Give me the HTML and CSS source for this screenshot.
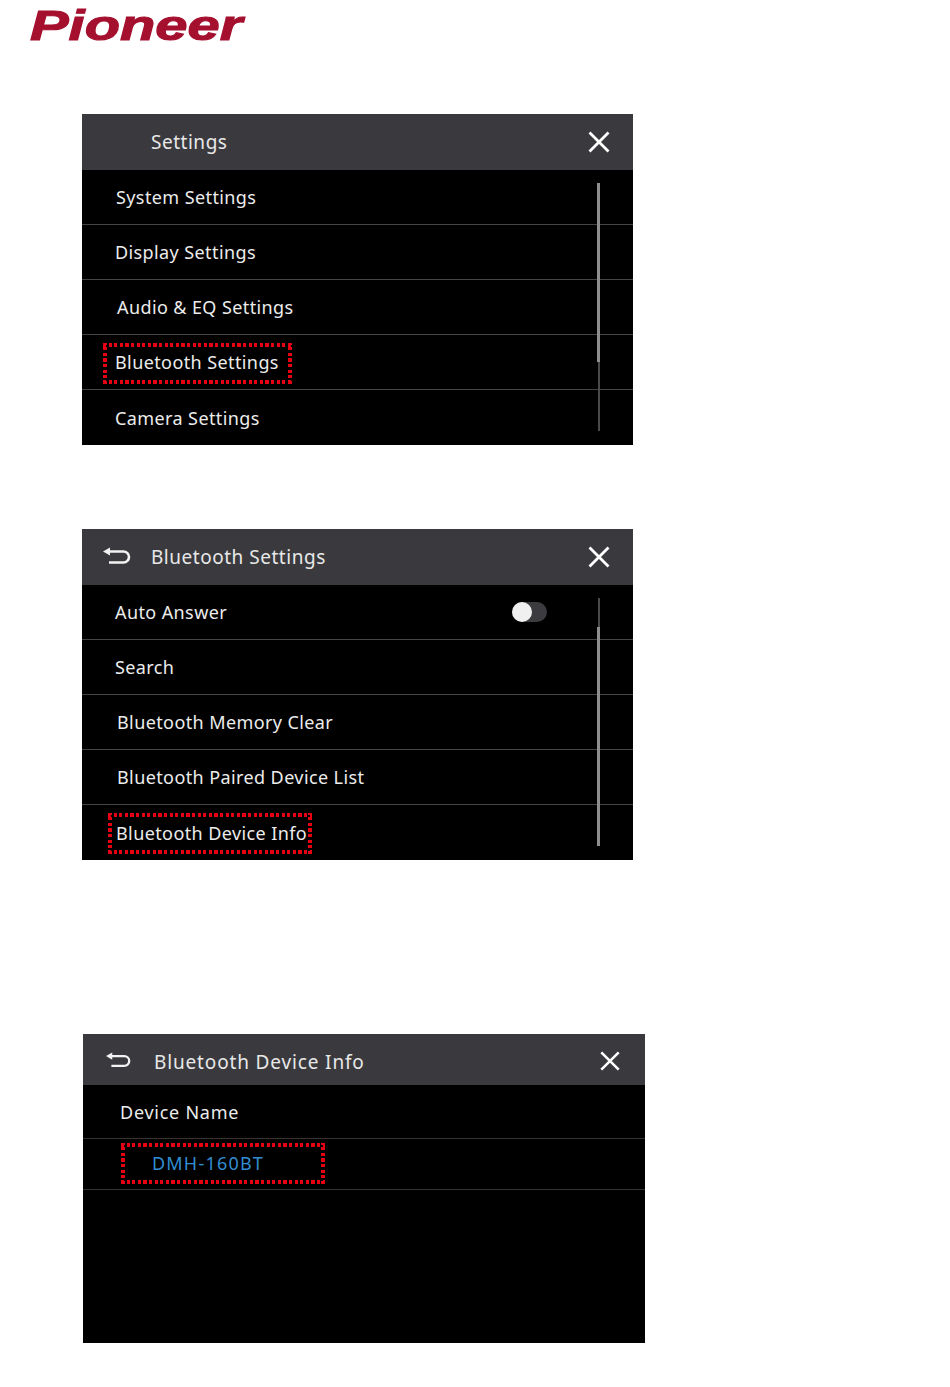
FILE: index.html
```html
<!DOCTYPE html>
<html lang="en">
<head>
<meta charset="utf-8">
<title>Pioneer Bluetooth Device Info</title>
<link rel="stylesheet" href="styles.css">
</head>
<body>
<div class="logo"><span class="logo-text">Pioneer</span></div>

<section class="panel panel-one">
  <header class="head">
    <span class="slot"></span>
    <span class="title">Settings</span>
    <svg class="close" width="24" height="24" viewBox="0 0 24 24"><path d="M2.5 2.5 21.5 21.5M21.5 2.5 2.5 21.5"/></svg>
  </header>
  <div class="row in-34"><span class="label">System Settings</span></div>
  <div class="row in-33"><span class="label">Display Settings</span></div>
  <div class="row in-35"><span class="label">Audio &amp; EQ Settings</span></div>
  <div class="row in-33"><span class="label">Bluetooth Settings<i class="mark mark-one"></i></span></div>
  <div class="row row-end in-33"><span class="label">Camera Settings</span></div>
  <div class="scroll scroll-one"><i class="thumb"></i><i class="rest"></i></div>
</section>

<section class="panel panel-two">
  <header class="head">
    <svg class="back" width="28" height="20" viewBox="0 0 28 20"><path class="arrow" d="M0 4.500 7 0.500V8.500Z"/><path class="curve" d="M6 4.500H20.500a5.500 5.500 0 0 1 0 11H6"/></svg>
    <span class="title">Bluetooth Settings</span>
    <svg class="close" width="24" height="24" viewBox="0 0 24 24"><path d="M2.5 2.5 21.500 21.500M21.500 2.500 2.500 21.500"/></svg>
  </header>
  <div class="row in-33 row-toggle"><span class="label">Auto Answer</span><span class="toggle"><i class="knob"></i></span></div>
  <div class="row in-33"><span class="label">Search</span></div>
  <div class="row in-35"><span class="label">Bluetooth Memory Clear</span></div>
  <div class="row in-35"><span class="label">Bluetooth Paired Device List</span></div>
  <div class="row row-end in-34"><span class="label">Bluetooth Device Info<i class="mark mark-two"></i></span></div>
  <div class="scroll scroll-two"><i class="rest rest-top"></i><i class="thumb"></i></div>
</section>

<section class="panel-info">
  <header class="head head-info">
    <svg class="back back-info" width="25" height="18" viewBox="0 0 28 20"><path class="arrow" d="M0 4.500 7 0.500V8.500Z"/><path class="curve" d="M6 4.500H20.500a5.500 5.500 0 0 1 0 11H6"/></svg>
    <span class="title title-info">Bluetooth Device Info</span>
    <svg class="close close-info" width="22" height="22" viewBox="0 0 24 24"><path d="M2.500 2.500 21.500 21.500M21.500 2.500 2.500 21.500"/></svg>
  </header>
  <div class="info-name"><span class="label label-info">Device Name</span></div>
  <div class="info-value"><span class="label label-info label-blue">DMH-160BT<i class="mark mark-three"></i></span></div>
</section>
</body>
</html>
```
FILE: styles.css
```css
* { box-sizing: border-box; }
html, body { margin: 0; padding: 0; background: #fff; }
body { font-family: "Noto Sans", "Open Sans", sans-serif; height: 1387px; overflow: hidden; }

.logo { height: 114px; padding: 0 0 0 30px; }
.logo-text {
  display: inline-block;
  font-family: "Liberation Sans", sans-serif;
  font-weight: 700;
  font-style: italic;
  font-size: 43px;
  line-height: 50px;
  color: #a5102f;
  -webkit-text-stroke: 1.1px #a5102f;
  transform: scaleX(1.345);
  transform-origin: 0 50%;
}

.panel { position: relative; width: 551px; height: 331px; margin-left: 82px; background: #000; }
.panel-one { margin-bottom: 84px; }
.panel-two { margin-bottom: 174px; }
.panel-info { width: 562px; height: 309px; margin-left: 83px; background: #000; }

.head { display: flex; align-items: center; height: 56px; padding: 0 23px 1px 21px; background: #3a3a3e; }
.head-info { height: 51px; padding: 0 25px 0 23px; }
.slot { width: 28px; flex: none; }
.back { flex: none; display: block; margin-top: 1px; }
.back-info { margin-top: 2px; }
.arrow { fill: #f2f2f2; }
.curve { fill: none; stroke: #f2f2f2; stroke-width: 2.6px; }
.title { flex: 1; margin-left: 20px; color: #e8e8e8; font-size: 19px; line-height: 26px; letter-spacing: 0.52px; }
.title-info { margin-left: 23px; letter-spacing: 0.85px; margin-top: 5px; }
.close { flex: none; display: block; margin-right: -1px; }
.close path { fill: none; stroke: #fff; stroke-width: 2.8px; }
.close-info { margin-top: 2px; }

.row { display: flex; align-items: center; height: 55px; border-bottom: 1px solid #454545; }
.row-end { border-bottom: 0; }
.row-toggle { position: relative; }
.in-33 { padding-left: 33px; }
.in-34 { padding-left: 34px; }
.in-35 { padding-left: 35px; }

.label { position: relative; display: block; color: #ececec; font-size: 18px; line-height: 26px; letter-spacing: 0.4px; }
.label-info { letter-spacing: 0.75px; }
.label-blue { color: #328dd2; letter-spacing: 1.2px; margin-top: -2px; }

.info-name { display: flex; align-items: center; height: 54px; padding-left: 37px; border-bottom: 1px solid #333; }
.info-value { display: flex; align-items: center; height: 51px; padding-left: 69px; border-bottom: 1px solid #333; }

.toggle { position: absolute; left: 430px; top: 17px; width: 35px; height: 20px; border-radius: 10px; background: #3c3c40; }
.knob { display: block; width: 20px; height: 20px; border-radius: 50%; background: #f0f0f0; }

.scroll { position: absolute; left: 515px; top: 69px; width: 3px; height: 248px; display: flex; flex-direction: column; align-items: flex-start; }
.thumb { display: block; width: 3px; flex: 1; background: #8e8e8e; }
.rest { display: block; width: 2px; margin-left: 1px; background: #4a4a4a; }
.scroll-one .rest { height: 69px; }
.rest-top { height: 29px; }

.mark {
  position: absolute;
  display: block;
  background-image:
    repeating-linear-gradient(90deg, #e60012 0 3.2px, transparent 3.2px 5.6px),
    repeating-linear-gradient(90deg, #e60012 0 3.2px, transparent 3.2px 5.6px),
    repeating-linear-gradient(0deg, #e60012 0 3.2px, transparent 3.2px 5.6px),
    repeating-linear-gradient(0deg, #e60012 0 3.2px, transparent 3.2px 5.6px);
  background-size: 100% 4px, 100% 4px, 4px 100%, 4px 100%;
  background-position: 0 0, 0 100%, 0 0, 100% 0;
  background-repeat: no-repeat;
}
.mark-one { left: -12px; right: -13px; top: -6px; bottom: -9px; }
.mark-two { left: -8px; right: -5px; top: -7px; bottom: -8px; }
.mark-three { left: -31px; right: -61px; top: -7px; bottom: -8px; }
```
